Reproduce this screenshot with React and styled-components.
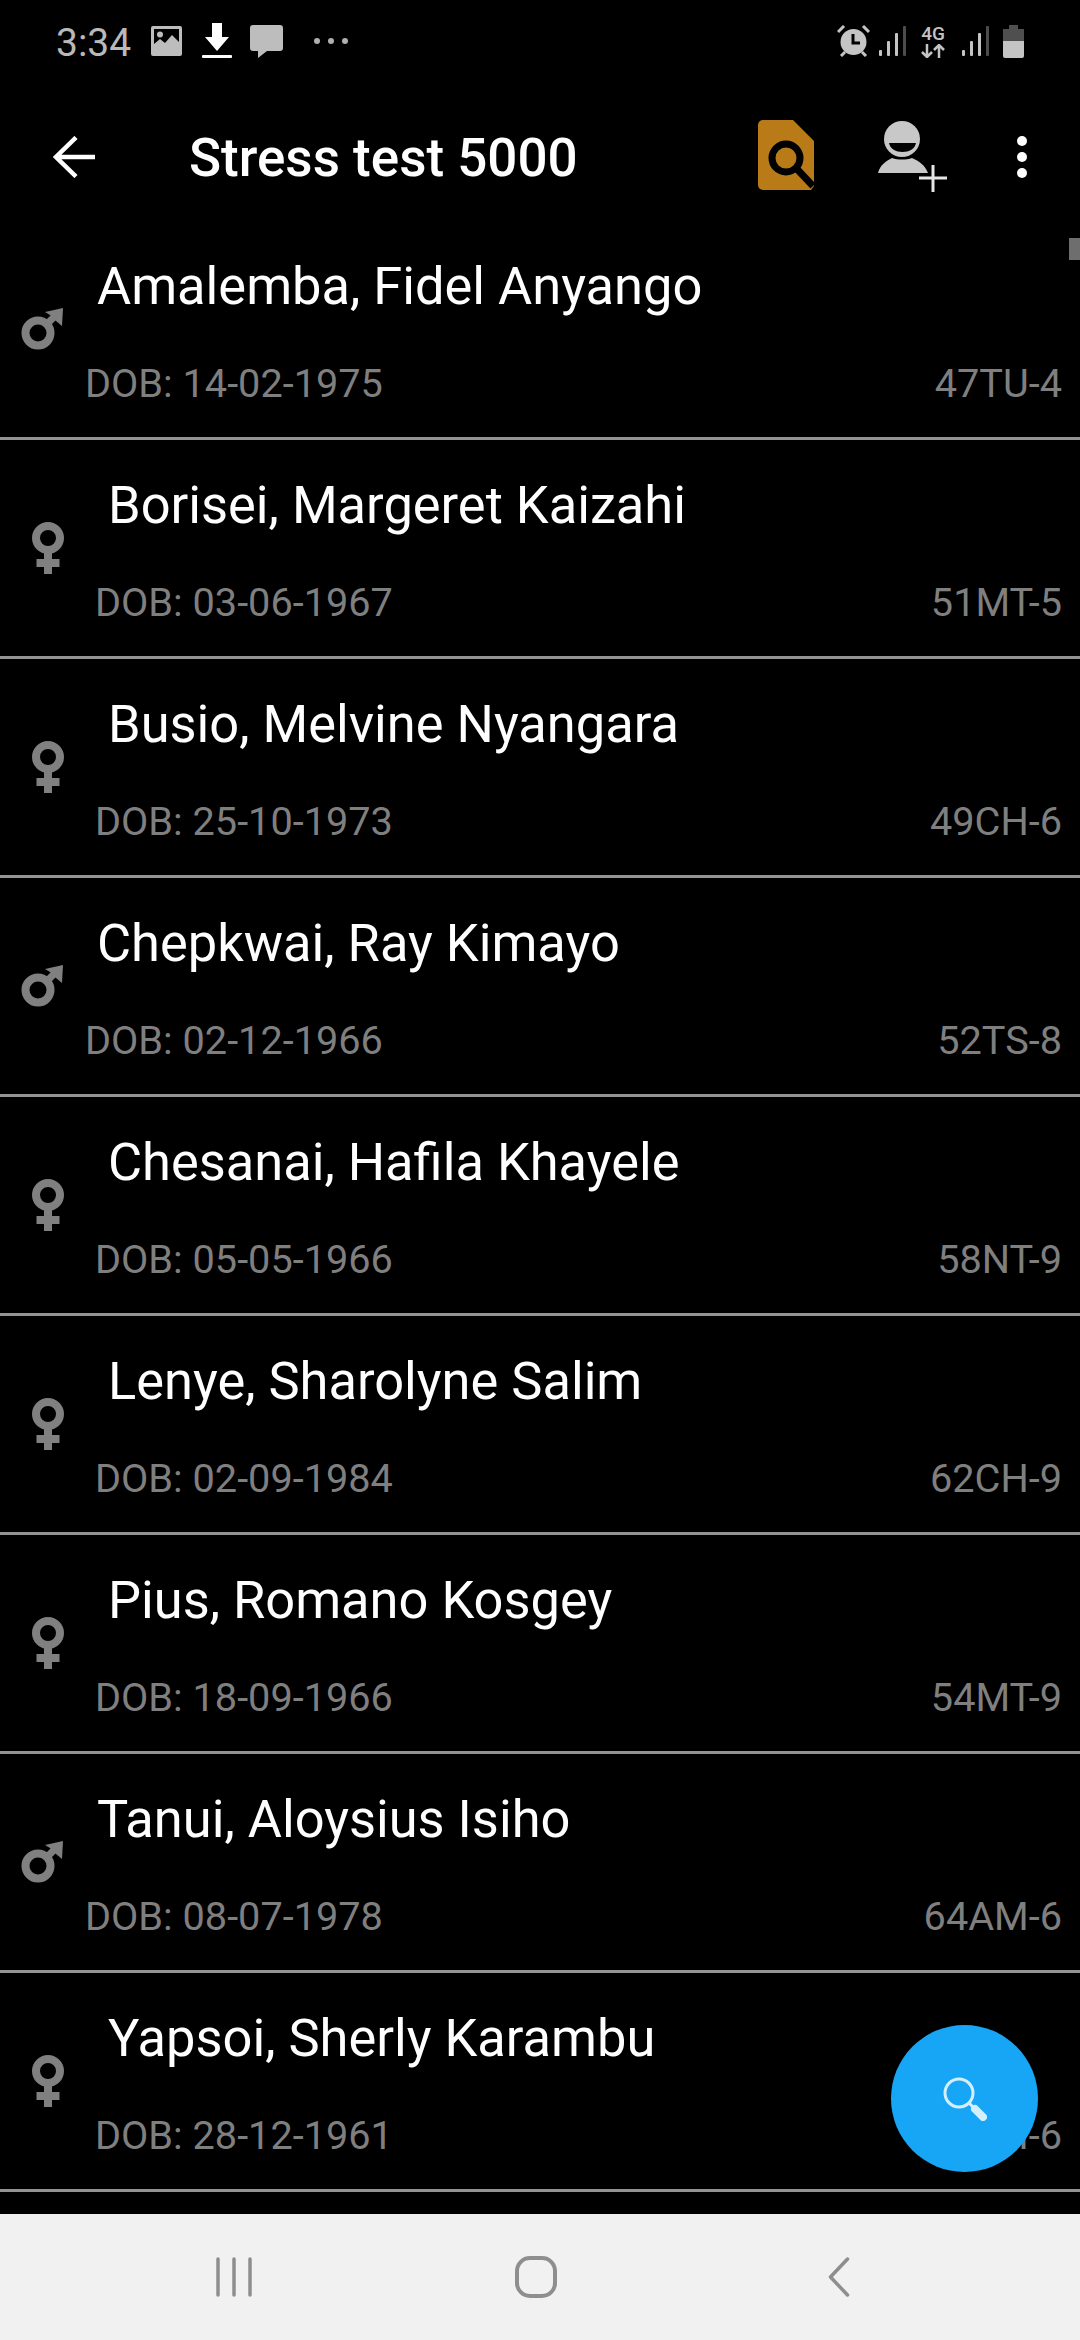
import React from "react";
import styled, { createGlobalStyle } from "styled-components";

const Global = createGlobalStyle`
  html, body { margin: 0; padding: 0; background: #000; }
  #root { width: 1080px; height: 2340px; }
`;
const Screen = styled.div`
  position: relative; width: 1080px; height: 2340px; overflow: hidden;
  display: flex; flex-direction: column; background: #000;
  font-family: Roboto, "Liberation Sans", sans-serif;
`;
const StatusBar = styled.div`
  height: 80px; flex: none; display: flex; align-items: center; padding: 2px 56px 0 56px; box-sizing: border-box;
`;
const Time = styled.span`
  font-size: 39px; line-height: 1; color: #b9b9b9; margin-right: 20px; position: relative; top: 2px;
`;
const Slot = styled.svg`
  flex: none; display: block; margin-left: ${p => p.$left || 0}px;
`;
const Network = styled.div`
  flex: none; width: 26px; margin-left: 14px; display: flex; flex-direction: column; align-items: center; gap: 2px;
`;
const NetworkLabel = styled.span`
  font-size: 19px; line-height: 17px; font-weight: 500; color: #c4c4c4;
`;
const Spacer = styled.div`flex: 1;`;
const Toolbar = styled.div`
  height: 141px; flex: none; display: flex; align-items: flex-start; box-sizing: border-box; padding: 40px 0 0 53px; 
`;
const Title = styled.h1`
  margin: 10px 0 0 94px; font-size: 53px; line-height: 56px; font-weight: 500; color: #fff; white-space: nowrap; flex: 1;
`;
const List = styled.div`
  flex: 1; overflow: hidden; display: flex; flex-direction: column; min-height: 0;
`;
const Row = styled.div`
  flex: none; height: 219px; box-sizing: border-box; border-bottom: 3px solid #939393;
  display: flex; align-items: flex-start; padding-left: ${p => (p.$female ? 32 : 21)}px; padding-right: 18px;
`;
const GenderIcon = styled.svg`
  flex: none; display: block; margin-top: ${p => (p.$female ? 82 : 87)}px;
`;
const Body = styled.div`
  flex: 1; min-width: 0; margin-left: ${p => (p.$female ? 32 : 22)}px; display: flex; flex-direction: column;
`;
const Name = styled.div`
  margin: 36px 0 0 12px; font-size: 52.400px; line-height: 58px; color: #fff; white-space: nowrap;
`;
const Meta = styled.div`
  margin-top: 46px; margin-left: ${p => (p.$female ? -1 : 0)}px; display: flex; justify-content: space-between;
  font-size: 39.700px; line-height: 46px; color: #7f7f7f; white-space: nowrap;
`;
const Scrollbar = styled.div`
  position: absolute; right: 0; top: 238px; width: 11px; height: 22px; background: #6e6e6e;
`;
const Fab = styled.div`
  position: absolute; left: 891px; top: 2025px; width: 147px; height: 147px; border-radius: 50%;
  background: #17a5f5; display: flex; align-items: center; justify-content: center;
`;
const FabGlyph = styled.svg`
  display: block;
`;
const Nav = styled.div`
  height: 126px; flex: none; background: #f1f1f1; display: flex; align-items: center; padding: 0 0 0 216px; box-sizing: border-box;
`;

const Male = () => (
  <GenderIcon width="42" height="42" viewBox="0 0 42 42">
    <circle cx="17" cy="25" r="12.500" fill="none" stroke="#808080" strokeWidth="8" />
    <path d="M25 17 L35 7" stroke="#808080" strokeWidth="7" fill="none" />
    <path d="M24 4 L42 0 L41 18 L35 13 L29 7 Z" fill="#808080" />
  </GenderIcon>
);
const Female = () => (
  <GenderIcon $female width="32" height="52" viewBox="0 0 32 52">
    <circle cx="16" cy="16" r="12" fill="none" stroke="#808080" strokeWidth="8" />
    <path d="M12 30h8v7h7.500v8h-7.500v7h-8v-7h-7.500v-8h7.500z" fill="#808080" />
  </GenderIcon>
);

const people = [
  ["Amalemba, Fidel Anyango", "14-02-1975", "47TU-4", 0],
  ["Borisei, Margeret Kaizahi", "03-06-1967", "51MT-5", 1],
  ["Busio, Melvine Nyangara", "25-10-1973", "49CH-6", 1],
  ["Chepkwai, Ray Kimayo", "02-12-1966", "52TS-8", 0],
  ["Chesanai, Hafila Khayele", "05-05-1966", "58NT-9", 1],
  ["Lenye, Sharolyne Salim", "02-09-1984", "62CH-9", 1],
  ["Pius, Romano Kosgey", "18-09-1966", "54MT-9", 1],
  ["Tanui, Aloysius Isiho", "08-07-1978", "64AM-6", 0],
  ["Yapsoi, Sherly Karambu", "28-12-1961", "63KM-6", 1],
];

export default function App() {
  return (
    <Screen>
      <Global />
      <StatusBar>
        <Time>3:34</Time>
        <Slot width="31" height="30" viewBox="0 0 31 30">
          <path fillRule="evenodd" d="M2 0h27a2 2 0 0 1 2 2v26a2 2 0 0 1-2 2H2a2 2 0 0 1-2-2V2a2 2 0 0 1 2-2zM3 3v15l6-5 5 4 7-8 7 7V3z" fill="#bdbdbd" />
          <circle cx="9" cy="8.500" r="3" fill="#bdbdbd" />
        </Slot>
        <Slot $left={20} width="30" height="36" viewBox="0 0 30 36">
          <path d="M10 0h10v14h7L15 28 3 14h7z" fill="#fff" />
          <rect x="0" y="32" width="30" height="3" rx="1" fill="#fff" />
        </Slot>
        <Slot $left={18} width="33" height="33" viewBox="0 0 33 33">
          <path d="M3 0h27a3 3 0 0 1 3 3v20a3 3 0 0 1-3 3H17l-9 7v-7H3a3 3 0 0 1-3-3V3a3 3 0 0 1 3-3z" fill="#bdbdbd" />
        </Slot>
        <Slot $left={31} width="34" height="8" viewBox="0 0 34 8">
          <circle cx="3" cy="4" r="3" fill="#b0b0b0" />
          <circle cx="17" cy="4" r="3" fill="#b0b0b0" />
          <circle cx="31" cy="4" r="3" fill="#b0b0b0" />
        </Slot>
        <Spacer />
        <Slot width="33" height="32" viewBox="0 0 33 32">
          <circle cx="16.500" cy="17" r="13" fill="#c4c4c4" />
          <path d="M16 9v9h7" stroke="#000" strokeWidth="3" fill="none" />
          <path d="M1 7l6-6M32 7l-6-6M4 31l4-4M29 31l-4-4" stroke="#c4c4c4" strokeWidth="3" />
        </Slot>
        <Slot $left={9} width="27" height="30" viewBox="0 0 27 30">
          <rect x="0" y="24" width="3" height="6" rx="1" fill="#c4c4c4" />
          <rect x="8" y="15" width="3" height="15" rx="1" fill="#c4c4c4" />
          <rect x="16" y="7" width="3" height="23" rx="1" fill="#c4c4c4" />
          <rect x="24" y="0" width="3" height="30" rx="1" fill="#4c4c4c" />
        </Slot>
        <Network>
          <NetworkLabel>4G</NetworkLabel>
          <svg width="24" height="14" viewBox="0 0 24 14" style={{ display: "block" }}>
            <path d="M6 0v12M1 8l5 5 5-5M18 14V2M13 6l5-5 5 5" stroke="#c4c4c4" strokeWidth="2.500" fill="none" />
          </svg>
        </Network>
        <Slot $left={16} width="27" height="30" viewBox="0 0 27 30">
          <rect x="0" y="24" width="3" height="6" rx="1" fill="#c4c4c4" />
          <rect x="8" y="15" width="3" height="15" rx="1" fill="#c4c4c4" />
          <rect x="16" y="7" width="3" height="23" rx="1" fill="#c4c4c4" />
          <rect x="24" y="0" width="3" height="30" rx="1" fill="#4c4c4c" />
        </Slot>
        <Slot $left={14} width="21" height="33" viewBox="0 0 21 33">
          <path d="M6 0h9v4h6v13H0V4h6z" fill="#4f4f4f" />
          <path d="M0 16h21v15a2 2 0 0 1-2 2H2a2 2 0 0 1-2-2z" fill="#c4c4c4" />
        </Slot>
      </StatusBar>
      <Toolbar>
        <Slot width="42" height="42" viewBox="0 0 42 42" style={{ marginTop: 16 }}>
          <path d="M42 21H3M23 1.500L3 21l20 19.500" stroke="#fff" strokeWidth="4.500" fill="none" />
        </Slot>
        <Title>Stress test 5000</Title>
        <Slot width="56" height="70" viewBox="0 0 56 70">
          <path d="M5 0h30l21 21v45l-3 4H5a5 5 0 0 1-5-5V5a5 5 0 0 1 5-5z" fill="#b97a18" />
          <circle cx="28" cy="38" r="14" fill="none" stroke="#000" strokeWidth="7" />
          <path d="M38 48l17 18" stroke="#000" strokeWidth="7" />
        </Slot>
        <Slot $left={63} width="70" height="72" viewBox="0 0 70 72">
          <circle cx="25" cy="19" r="18" fill="#c8c8c8" />
          <path d="M12 23h27c-1 6-7 9-13.500 9S13 29 12 23z" fill="#000" />
          <path d="M1 53c2-8 8-12 14-15 6 2 14 2 20 0 7 3 13 7 16 15z" fill="#c8c8c8" />
          <path d="M42 58h28M56 45v27" stroke="#000" strokeWidth="7" />
          <path d="M42 58h28M56 45v27" stroke="#e6e6e6" strokeWidth="3" />
        </Slot>
        <Slot $left={70} width="10" height="42" viewBox="0 0 10 42" style={{ marginTop: 16, marginRight: 53 }}>
          <circle cx="5" cy="5" r="5" fill="#fff" />
          <circle cx="5" cy="21" r="5" fill="#fff" />
          <circle cx="5" cy="37" r="5" fill="#fff" />
        </Slot>
      </Toolbar>
      <List>
        {people.map(([name, dob, id, female]) => (
          <Row key={name} $female={!!female}>
            {female ? <Female /> : <Male />}
            <Body $female={!!female}>
              <Name>{name}</Name>
              <Meta $female={!!female}>
                <span>DOB: {dob}</span>
                <span>{id}</span>
              </Meta>
            </Body>
          </Row>
        ))}
      </List>
      <Nav>
        <Slot width="36" height="40" viewBox="0 0 36 40">
          <path d="M2 2v36M18 2v36M34 2v36" stroke="#8e8e8e" strokeWidth="3.500" strokeLinecap="round" />
        </Slot>
        <Slot $left={263} width="42" height="42" viewBox="0 0 42 42">
          <rect x="2" y="2" width="38" height="38" rx="13" fill="none" stroke="#8e8e8e" strokeWidth="4" />
        </Slot>
        <Slot $left={271} width="22" height="40" viewBox="0 0 22 40">
          <path d="M19.500 2L2.500 20l17 18" stroke="#8e8e8e" strokeWidth="3.500" fill="none" strokeLinecap="round" strokeLinejoin="round" />
        </Slot>
      </Nav>
      <Scrollbar />
      <Fab>
        <FabGlyph width="44" height="44" viewBox="0 0 44 44">
          <circle cx="16" cy="16" r="14" fill="none" stroke="#d4eefc" strokeWidth="3" />
          <path d="M26 26l6 6" stroke="#d4eefc" strokeWidth="3" />
          <path d="M32 32l8 8" stroke="#d4eefc" strokeWidth="8" strokeLinecap="round" />
        </FabGlyph>
      </Fab>
    </Screen>
  );
}
